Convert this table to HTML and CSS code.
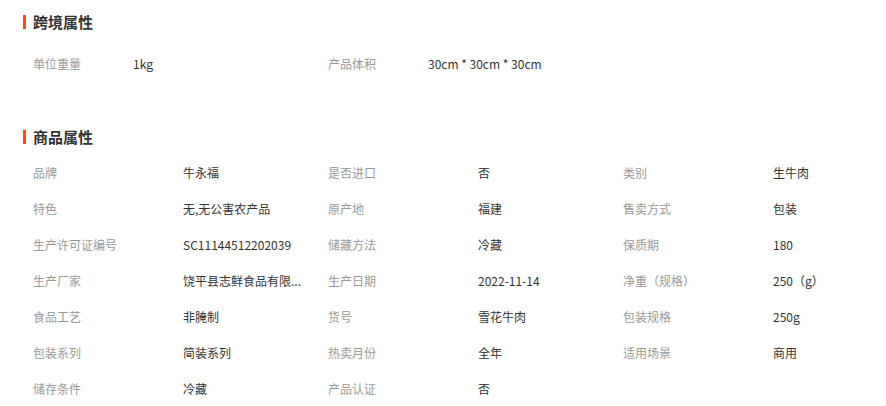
FILE: index.html
```html
<!DOCTYPE html>
<html lang="zh">
<head>
<meta charset="utf-8">
<link rel="stylesheet" href="styles.css">
</head>
<body>
<section class="sec sec-cross">
  <h3 class="title">跨境属性</h3>
  <div class="grid grid-cross">
    <div class="item"><span class="label">单位重量</span><span class="value">1kg</span></div>
    <div class="item"><span class="label">产品体积</span><span class="value">30cm * 30cm * 30cm</span></div>
  </div>
</section>
<section class="sec sec-goods">
  <h3 class="title">商品属性</h3>
  <div class="grid">
    <div class="item"><span class="label">品牌</span><span class="value">牛永福</span></div>
    <div class="item"><span class="label">是否进口</span><span class="value">否</span></div>
    <div class="item"><span class="label">类别</span><span class="value">生牛肉</span></div>
    <div class="item"><span class="label">特色</span><span class="value">无,无公害农产品</span></div>
    <div class="item"><span class="label">原产地</span><span class="value">福建</span></div>
    <div class="item"><span class="label">售卖方式</span><span class="value">包装</span></div>
    <div class="item"><span class="label">生产许可证编号</span><span class="value">SC11144512202039</span></div>
    <div class="item"><span class="label">储藏方法</span><span class="value">冷藏</span></div>
    <div class="item"><span class="label">保质期</span><span class="value">180</span></div>
    <div class="item"><span class="label">生产厂家</span><span class="value">饶平县志鲜食品有限...</span></div>
    <div class="item"><span class="label">生产日期</span><span class="value">2022-11-14</span></div>
    <div class="item"><span class="label">净重（规格）</span><span class="value">250（g）</span></div>
    <div class="item"><span class="label">食品工艺</span><span class="value">非腌制</span></div>
    <div class="item"><span class="label">货号</span><span class="value">雪花牛肉</span></div>
    <div class="item"><span class="label">包装规格</span><span class="value">250g</span></div>
    <div class="item"><span class="label">包装系列</span><span class="value">简装系列</span></div>
    <div class="item"><span class="label">热卖月份</span><span class="value">全年</span></div>
    <div class="item"><span class="label">适用场景</span><span class="value">商用</span></div>
    <div class="item"><span class="label">储存条件</span><span class="value">冷藏</span></div>
    <div class="item"><span class="label">产品认证</span><span class="value">否</span></div>
  </div>
</section>
</body>
</html>
```
FILE: styles.css
```css
html, body {
  margin: 0;
  padding: 0;
  background: #fff;
}
body {
  width: 886px;
  height: 406px;
  overflow: hidden;
  font-family: "Noto Sans CJK SC", "Noto Sans", sans-serif;
  font-size: 12px;
  color: #333;
}
.sec {
  padding-left: 23px;
}
.sec-cross {
  padding-top: 12px;
}
.sec-goods {
  margin-top: 46px;
}
.title {
  margin: 0;
  height: 20px;
  display: flex;
  align-items: center;
  font-size: 15px;
  font-weight: bold;
  color: #333;
  line-height: 20px;
}
.title::before {
  content: "";
  display: block;
  width: 3px;
  height: 14px;
  background: #ff4a00;
  margin-right: 7px;
}
.grid {
  display: grid;
  grid-template-columns: repeat(3, 295px);
  padding-left: 10px;
  margin-top: 7px;
}
.grid-cross {
  margin-top: 13px;
}
.item {
  display: flex;
  align-items: center;
  height: 36px;
}
.label {
  width: 150px;
  flex: none;
  color: #999;
}
.value {
  white-space: nowrap;
  color: #333;
}
.grid-cross .label {
  width: 100px;
}
```
